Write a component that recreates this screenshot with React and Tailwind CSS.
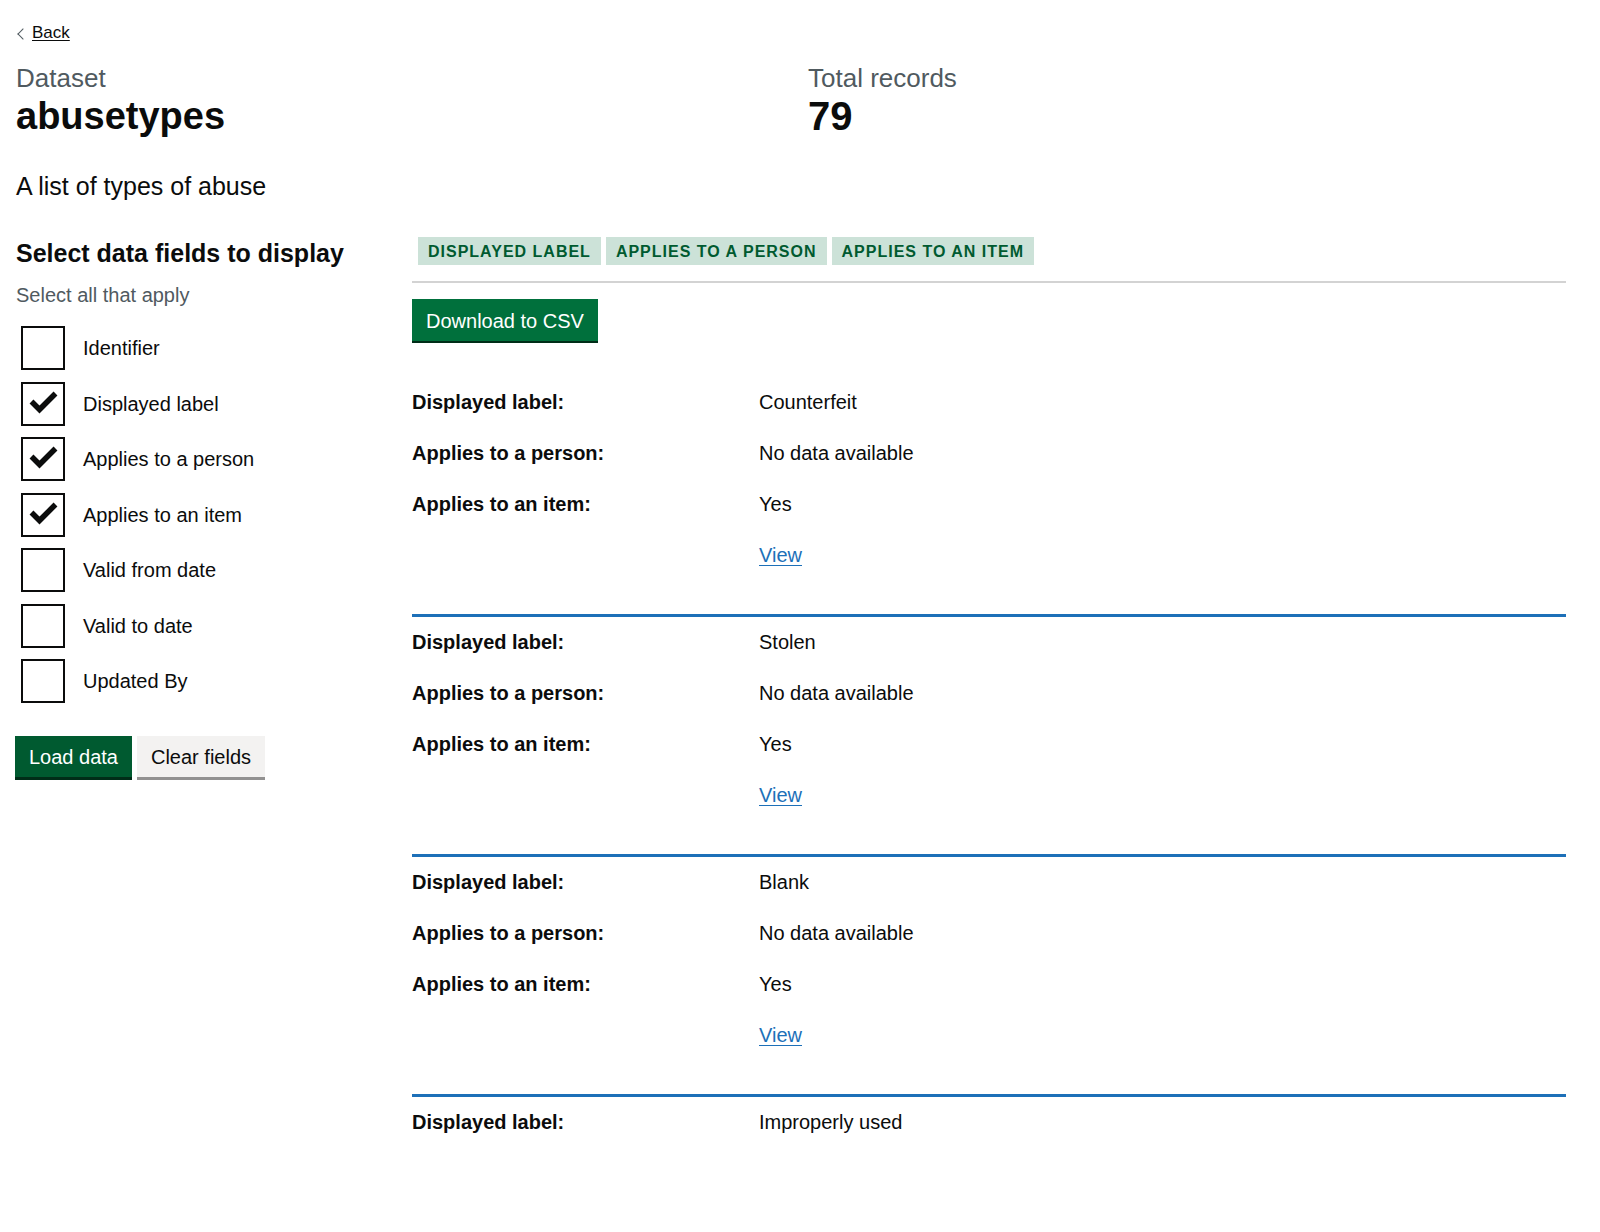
import React from "react";

const fields = [
  { label: "Identifier", checked: false },
  { label: "Displayed label", checked: true },
  { label: "Applies to a person", checked: true },
  { label: "Applies to an item", checked: true },
  { label: "Valid from date", checked: false },
  { label: "Valid to date", checked: false },
  { label: "Updated By", checked: false },
];

const records = [
  { label: "Counterfeit", person: "No data available", item: "Yes" },
  { label: "Stolen", person: "No data available", item: "Yes" },
  { label: "Blank", person: "No data available", item: "Yes" },
];

function Checkbox({ label, checked }) {
  return (
    <div className="flex items-center h-[44px]">
      <div className="relative ml-[5px] w-[44px] h-[44px] border-2 border-[#0b0c0c] bg-white shrink-0">
        {checked && (
          <svg className="absolute -top-[2px] -left-[2px]" width="44" height="44" viewBox="0 0 44 44">
            <polyline
              points="10.5,19.5 18.5,27.5 34.5,11.5"
              fill="none"
              stroke="#0b0c0c"
              strokeWidth="5.5"
              strokeLinecap="butt"
              strokeLinejoin="miter"
            />
          </svg>
        )}
      </div>
      <span className="ml-[18px] text-[20px] leading-[44px]">{label}</span>
    </div>
  );
}

function Row({ k, children }) {
  return (
    <div className="flex py-[10px] text-[20px] leading-[31px]">
      <div className="w-[347px] shrink-0 font-bold">{k}</div>
      <div className="flex-1">{children}</div>
    </div>
  );
}

function Record({ r, first }) {
  return (
    <div className={first ? "pb-[33px]" : "border-t-[3px] border-[#1d70b8] pb-[33px]"}>
      <Row k="Displayed label:">{r.label}</Row>
      <Row k="Applies to a person:">{r.person}</Row>
      <Row k="Applies to an item:">{r.item}</Row>
      <Row k="">
        <a href="#" className="text-[#1d70b8] underline underline-offset-[3px] decoration-1">View</a>
      </Row>
    </div>
  );
}

export default function App() {
  return (
    <div className="min-h-[1232px] bg-white text-[#0b0c0c] font-['Liberation_Sans',Arial,sans-serif]">
      <div className="pl-4 w-[1566px]">
        <a href="#" className="relative inline-block mt-[23px] pl-[16px] text-[17px] leading-[20px] underline underline-offset-[2px] decoration-1 text-[#0b0c0c]">
          <span className="absolute left-[3px] top-[7px] w-[8px] h-[8px] border-l border-t border-[#505a5f] -rotate-45"></span>
          Back
        </a>

        <div className="flex">
          <div className="w-[792px]">
            <div className="mt-[18px] text-[26px] leading-[30px] text-[#505a5f]">Dataset</div>
            <h1 className="mt-[2px] text-[38px] leading-[42px] font-bold">abusetypes</h1>
          </div>
          <div className="flex-1">
            <div className="mt-[18px] text-[26px] leading-[30px] text-[#505a5f]">Total records</div>
            <div className="mt-[2px] text-[40px] leading-[42px] font-bold">79</div>
          </div>
        </div>

        <p className="mt-[34px] text-[25px] leading-[30px]">A list of types of abuse</p>

        <div className="mt-[36px] flex gap-[30px]">
          <div className="w-[366px] shrink-0">
            <h2 className="mt-[1px] text-[25px] leading-[30px] font-bold">Select data fields to display</h2>
            <div className="mt-[15px] text-[20px] leading-[25px] text-[#505a5f]">Select all that apply</div>
            <div className="mt-[18px] flex flex-col gap-[11.5px]">
              {fields.map((f) => (
                <Checkbox key={f.label} label={f.label} checked={f.checked} />
              ))}
            </div>
            <div className="mt-[33px] flex gap-[5px]">
              <button className="-ml-[1px] bg-[#005a30] text-white text-[20px] leading-[25px] pt-[9px] pb-[7px] px-[14px] shadow-[0_3px_0_#002d18]">
                Load data
              </button>
              <button className="bg-[#f3f2f1] text-[#0b0c0c] text-[20px] leading-[25px] pt-[9px] pb-[7px] px-[14px] shadow-[0_3px_0_#929191]">
                Clear fields
              </button>
            </div>
          </div>

          <div className="flex-1">
            <div className="flex gap-[5px] pl-[6px] pb-[16px] border-b-2 border-[#d3d3d3]">
              {["Displayed label", "Applies to a person", "Applies to an item"].map((t) => (
                <span
                  key={t}
                  className="bg-[#cce2d8] text-[#005a30] font-bold uppercase tracking-[1px] text-[16px] leading-[17px] pt-[6px] pb-[5px] px-[10px]"
                >
                  {t}
                </span>
              ))}
            </div>
            <button className="mt-[16px] bg-[#00703c] text-white text-[20px] leading-[25px] pt-[10px] pb-[7px] px-[14px] shadow-[0_2px_0_#002d18]">
              Download to CSV
            </button>
            <div className="mt-[36px]">
              {records.map((r, i) => (
                <Record key={r.label} r={r} first={i === 0} />
              ))}
              <div className="border-t-[3px] border-[#1d70b8]">
                <Row k="Displayed label:">Improperly used</Row>
              </div>
            </div>
          </div>
        </div>
      </div>
    </div>
  );
}
